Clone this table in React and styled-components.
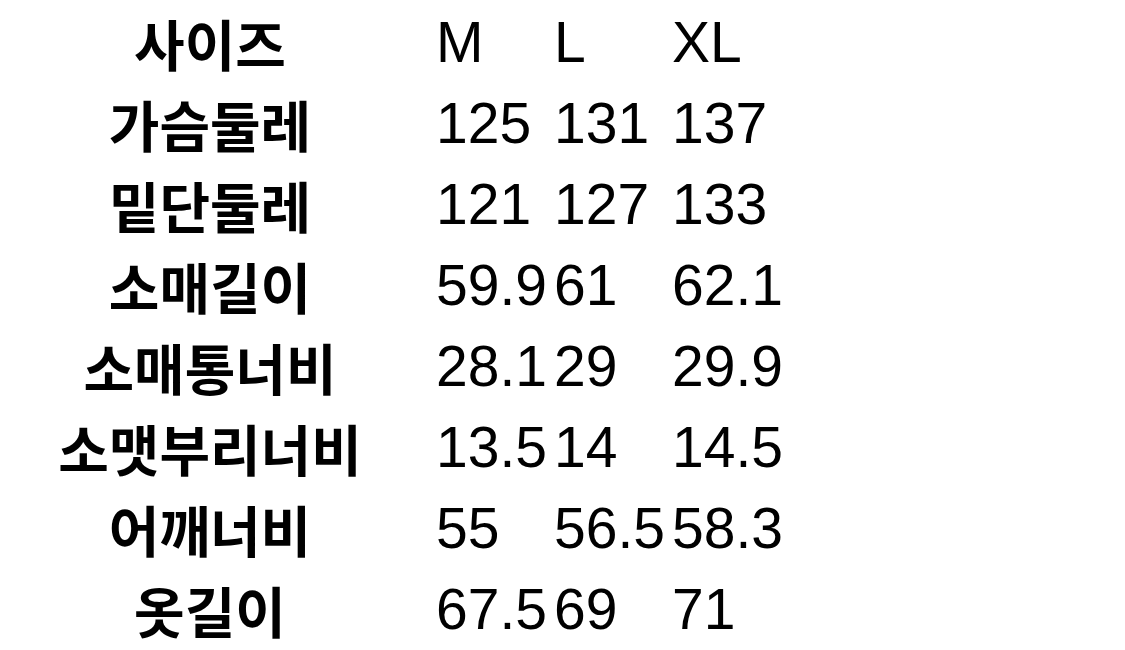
import React from 'react';
import styled, { createGlobalStyle } from 'styled-components';

const GlobalStyle = createGlobalStyle`
    html, body {
        margin: 0;
        padding: 0;
        background: #ffffff;
    }
`;

const SizeTable = styled.div`
    display: grid;
    grid-template-columns: 436px repeat(3, 118px);
    grid-auto-rows: 81px;
    padding-top: 1px;
    color: #000;
`;

const LabelCell = styled.div`
    display: flex;
    align-items: center;
    justify-content: center;
    padding-right: 16px;
    font-family: "Noto Sans CJK KR", "Noto Sans", sans-serif;
    font-weight: 700;
    font-size: 55px;
    white-space: nowrap;
`;

const ValueCell = styled.div`
    display: flex;
    align-items: center;
    font-family: "Liberation Sans", Arial, sans-serif;
    font-size: 57px;
    white-space: nowrap;
    overflow: visible;
`;

const rows = [
    ['사이즈', 'M', 'L', 'XL'],
    ['가슴둘레', '125', '131', '137'],
    ['밑단둘레', '121', '127', '133'],
    ['소매길이', '59.9', '61', '62.1'],
    ['소매통너비', '28.1', '29', '29.9'],
    ['소맷부리너비', '13.5', '14', '14.5'],
    ['어깨너비', '55', '56.5', '58.3'],
    ['옷길이', '67.5', '69', '71'],
];

export default function App() {
    return (
        <>
            <GlobalStyle />
            <SizeTable>
                {rows.map(([label, ...values]) => (
                    <React.Fragment key={label}>
                        <LabelCell>{label}</LabelCell>
                        {values.map((v, i) => (
                            <ValueCell key={i}>{v}</ValueCell>
                        ))}
                    </React.Fragment>
                ))}
            </SizeTable>
        </>
    );
}
